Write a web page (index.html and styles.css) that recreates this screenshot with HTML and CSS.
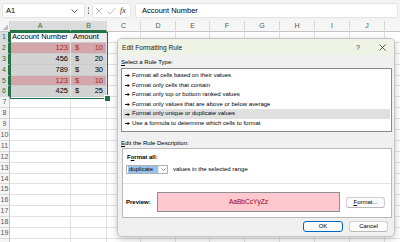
FILE: index.html
```html
<!DOCTYPE html>
<html lang="en">
<head>
	<meta charset="UTF-8">
	<title>Edit Formatting Rule</title>
	<link rel="stylesheet" href="styles.css">
</head>
<body>
	<div class="topbar">
		<div class="namebox">
			<span>A1</span>
			<svg width="7" height="4" viewBox="0 0 7 4"><polyline points="0.5,0.5 3.5,3.5 6.5,0.5" fill="none" stroke="#555" stroke-width="0.9"/></svg>
		</div>
		<div class="dots"><b></b><b></b><b></b></div>
		<div class="fxbox">
			<svg width="8" height="8" viewBox="0 0 8 8"><path d="M1 1L7 7M7 1L1 7" stroke="#b8b8b8" stroke-width="0.9"/></svg>
			<svg width="9" height="8" viewBox="0 0 9 8"><polyline points="0.5,4.5 3,7 8.5,1" fill="none" stroke="#b8b8b8" stroke-width="0.9"/></svg>
			<span class="fx">fx</span>
		</div>
		<div class="formula">Account Number</div>
	</div>

	<div class="sheet">
		<div class="row head"><div class="corner"></div><div class="sel">A</div><div class="sel">B</div><div>C</div><div>D</div><div>E</div><div>F</div><div>G</div><div>H</div><div>I</div><div>J</div><div></div></div>
		<div class="row"><div class="rh sel">1</div><div class="c act">Account Number</div><div class="c first">Amount</div><i></i><i></i><i></i><i></i><i></i><i></i><i></i><i></i><i></i></div>
		<div class="row"><div class="rh sel">2</div><div class="c num dup">123</div><div class="c amt dup"><span>$</span><span>10</span></div><i></i><i></i><i></i><i></i><i></i><i></i><i></i><i></i><i></i></div>
		<div class="row"><div class="rh sel">3</div><div class="c num">456</div><div class="c amt"><span>$</span><span>20</span></div><i></i><i></i><i></i><i></i><i></i><i></i><i></i><i></i><i></i></div>
		<div class="row"><div class="rh sel">4</div><div class="c num">789</div><div class="c amt"><span>$</span><span>30</span></div><i></i><i></i><i></i><i></i><i></i><i></i><i></i><i></i><i></i></div>
		<div class="row"><div class="rh sel">5</div><div class="c num dup">123</div><div class="c amt dup"><span>$</span><span>10</span></div><i></i><i></i><i></i><i></i><i></i><i></i><i></i><i></i><i></i></div>
		<div class="row"><div class="rh sel">6</div><div class="c num">425</div><div class="c amt"><span>$</span><span>25</span></div><i></i><i></i><i></i><i></i><i></i><i></i><i></i><i></i><i></i></div>
		<div class="row"><div class="rh">7</div><i></i><i></i><i></i><i></i><i></i><i></i><i></i><i></i><i></i><i></i><i></i></div>
		<div class="row"><div class="rh">8</div><i></i><i></i><i></i><i></i><i></i><i></i><i></i><i></i><i></i><i></i><i></i></div>
		<div class="row"><div class="rh">9</div><i></i><i></i><i></i><i></i><i></i><i></i><i></i><i></i><i></i><i></i><i></i></div>
		<div class="row"><div class="rh">10</div><i></i><i></i><i></i><i></i><i></i><i></i><i></i><i></i><i></i><i></i><i></i></div>
		<div class="row"><div class="rh">11</div><i></i><i></i><i></i><i></i><i></i><i></i><i></i><i></i><i></i><i></i><i></i></div>
		<div class="row"><div class="rh">12</div><i></i><i></i><i></i><i></i><i></i><i></i><i></i><i></i><i></i><i></i><i></i></div>
		<div class="row"><div class="rh">13</div><i></i><i></i><i></i><i></i><i></i><i></i><i></i><i></i><i></i><i></i><i></i></div>
		<div class="row"><div class="rh">14</div><i></i><i></i><i></i><i></i><i></i><i></i><i></i><i></i><i></i><i></i><i></i></div>
		<div class="row"><div class="rh">15</div><i></i><i></i><i></i><i></i><i></i><i></i><i></i><i></i><i></i><i></i><i></i></div>
		<div class="row"><div class="rh">16</div><i></i><i></i><i></i><i></i><i></i><i></i><i></i><i></i><i></i><i></i><i></i></div>
		<div class="row"><div class="rh">17</div><i></i><i></i><i></i><i></i><i></i><i></i><i></i><i></i><i></i><i></i><i></i></div>
		<div class="row"><div class="rh">18</div><i></i><i></i><i></i><i></i><i></i><i></i><i></i><i></i><i></i><i></i><i></i></div>
		<div class="row"><div class="rh">19</div><i></i><i></i><i></i><i></i><i></i><i></i><i></i><i></i><i></i><i></i><i></i></div>
		<div class="row"><div class="rh"></div><i></i><i></i><i></i><i></i><i></i><i></i><i></i><i></i><i></i><i></i><i></i></div>
	</div>
	<div class="selbox"></div>

	<div class="dialog">
		<div class="titlebar">
			<span class="title">Edit Formatting Rule</span>
			<span class="help">?</span>
			<span class="close"><svg width="7" height="7" viewBox="0 0 7 7"><path d="M0.5 0.5L6.5 6.5M6.5 0.5L0.5 6.5" stroke="#333" stroke-width="0.8"/></svg></span>
		</div>
		<div class="dbody">
			<div class="label"><u>S</u>elect a Rule Type:</div>
			<ul class="rules">
				<li><svg class="arr" width="5" height="3" viewBox="0 0 5 3"><path d="M0 1.5H3" stroke="#000" stroke-width="0.9"/><polygon points="2.6,0 5,1.5 2.6,3" fill="#000"/></svg>Format all cells based on their values</li>
				<li><svg class="arr" width="5" height="3" viewBox="0 0 5 3"><path d="M0 1.5H3" stroke="#000" stroke-width="0.9"/><polygon points="2.6,0 5,1.5 2.6,3" fill="#000"/></svg>Format only cells that contain</li>
				<li><svg class="arr" width="5" height="3" viewBox="0 0 5 3"><path d="M0 1.5H3" stroke="#000" stroke-width="0.9"/><polygon points="2.6,0 5,1.5 2.6,3" fill="#000"/></svg>Format only top or bottom ranked values</li>
				<li><svg class="arr" width="5" height="3" viewBox="0 0 5 3"><path d="M0 1.5H3" stroke="#000" stroke-width="0.9"/><polygon points="2.6,0 5,1.5 2.6,3" fill="#000"/></svg>Format only values that are above or below average</li>
				<li class="cur"><svg class="arr" width="5" height="3" viewBox="0 0 5 3"><path d="M0 1.5H3" stroke="#000" stroke-width="0.9"/><polygon points="2.6,0 5,1.5 2.6,3" fill="#000"/></svg>Format only unique or duplicate values</li>
				<li><svg class="arr" width="5" height="3" viewBox="0 0 5 3"><path d="M0 1.5H3" stroke="#000" stroke-width="0.9"/><polygon points="2.6,0 5,1.5 2.6,3" fill="#000"/></svg>Use a formula to determine which cells to format</li>
			</ul>
			<div class="label gap"><u>E</u>dit the Rule Description:</div>
			<div class="desc">
				<div class="desc-top">
					<div class="fmt">F<u>o</u>rmat all:</div>
					<div class="pick">
						<div class="combo">
							<span class="val">duplicate</span>
							<span class="drop"><svg width="5" height="3" viewBox="0 0 5 3"><polyline points="0.3,0.3 2.5,2.5 4.7,0.3" fill="none" stroke="#666" stroke-width="0.7"/></svg></span>
						</div>
						<span class="range">values in the selected range</span>
					</div>
				</div>
				<div class="desc-bottom">
					<b class="plabel">Preview:</b>
					<div class="preview">AaBbCcYyZz</div>
					<button class="btn fbtn"><u>F</u>ormat...</button>
				</div>
			</div>
			<div class="buttons">
				<button class="btn ok">OK</button>
				<button class="btn">Cancel</button>
			</div>
		</div>
	</div>
</body>
</html>
```

FILE: styles.css
```css
*{margin:0; padding:0; box-sizing:border-box;}
body{
	width:400px;
	height:242px;
	overflow:hidden;
	position:relative;
	background:#fff;
	font-family:"Liberation Sans", Arial, sans-serif;
	color:#000;
}

/* formula bar */
.topbar{
	height:21px;
	background:#f3f3f3;
	display:flex;
	align-items:center;
	padding:0 2px;
}
.namebox{
	width:83px;
	height:15px;
	background:#fff;
	border:1px solid #e4e4e4;
	border-radius:3px;
	display:flex;
	align-items:center;
	justify-content:space-between;
	padding:0 6px 0 3px;
	font-size:7.5px;
}
.dots{
	width:7px;
	display:flex;
	flex-direction:column;
	align-items:center;
	gap:1.2px;
}
.dots b{width:1.3px; height:1.3px; background:#666; border-radius:50%;}
.fxbox{
	width:39px;
	height:15px;
	background:#fff;
	border:1px solid #e4e4e4;
	border-radius:3px;
	display:flex;
	align-items:center;
	gap:4px;
	padding-left:2px;
}
.fx{font-family:"Liberation Serif", serif; font-style:italic; font-size:8px; color:#333;}
.formula{
	flex:1;
	height:15px;
	margin-left:4px;
	background:#fff;
	border:1px solid #e4e4e4;
	border-radius:3px;
	padding-left:6px;
	font-size:7.5px;
	line-height:13px;
}

/* grid */
.row{
	display:grid;
	grid-template-columns:10px 61px 36px 34px 35px 34px repeat(6,35px);
	width:420px;
	height:10.9px;
}
.row>*{
	border-right:1px solid #e1e1e1;
	border-bottom:1px solid #e1e1e1;
	font-size:7.5px;
	line-height:10px;
	white-space:nowrap;
	overflow:hidden;
}
.row.head{height:11px;}
.head>*{
	background:#f5f5f5;
	color:#555;
	text-align:center;
	font-size:7px;
	border-right-color:#d8d8d8;
	border-bottom-color:#c4c4c4;
}
.head .sel{background:#dcdcdc; color:#217346; border-bottom:2px solid #217346;}
.corner{
	background:#f5f5f5 linear-gradient(to top left, #bdbdbd 50%, transparent 50%) no-repeat right 1px bottom 1px / 5px 5px;
}
.row .rh{
	background:#f5f5f5;
	color:#555;
	text-align:center;
	font-size:7px;
	border-right-color:#c4c4c4;
	border-bottom-color:#dadada;
}
.row .rh.sel{background:#dcdcdc; color:#217346; border-right:2px solid #217346;}
.c{
	background:#d3d3d3;
	padding:0 2px;
	border-right-color:#e3e3e3;
	border-bottom-color:#cbcbcb;
}
.c.act{background:#fff;}
.c.first{background:#ececec;}
.num{text-align:right;}
.amt{display:flex; justify-content:space-between; padding:0 3px 0 4px;}
.dup{background:#d3a6ab; color:#a3262f;}
.selbox{
	position:absolute;
	left:9.5px;
	top:31.5px;
	width:98px;
	height:67px;
	border:1.5px solid #217346;
}
.selbox::after{
	content:"";
	position:absolute;
	right:-4px;
	bottom:-4px;
	width:5px;
	height:5px;
	background:#217346;
	border:1px solid #fff;
}

/* dialog */
.dialog{
	position:absolute;
	left:117px;
	top:38px;
	width:278px;
	height:199px;
	background:#f0f0f0;
	border:1px solid #c4c4c4;
	border-radius:5px;
	box-shadow:0 2px 7px rgba(0,0,0,.22);
	overflow:hidden;
	font-size:6px;
}
.titlebar{
	height:16px;
	background:#eef3e5;
	display:flex;
	align-items:center;
	padding-left:4px;
}
.title{flex:1; font-size:6.6px; color:#1a1a1a;}
.help{width:20px; text-align:center; font-size:7px; color:#333;}
.close{width:22px; margin:0 1px 0 3px; display:flex; justify-content:center;}
.dbody{padding:3px 2px 0 3px;}
.label{line-height:8px; height:8px;}
.label.gap{margin-top:7px;}
.rules{
	list-style:none;
	margin-top:2px;
	background:#fff;
	border:1px solid #8a8a8a;
	padding:2px 1px;
}
.rules li{
	height:9.6px;
	line-height:9.6px;
	padding-left:2px;
	display:flex;
	align-items:center;
	white-space:nowrap;
}
.rules li.cur{background:#e0e0e0;}
.arr{margin-right:2px; flex:none;}
.desc{
	margin:1.4px 0 0 1px;
	height:70px;
	background:#fff;
	border:1px solid #b9b9b9;
}
.desc-top{
	height:35px;
	border-bottom:1px solid #e3e3e3;
	padding:4px 3px 0 3px;
}
.fmt{font-weight:bold; line-height:8px; margin-left:1px;}
.pick{display:flex; align-items:center; margin-top:4px;}
.combo{
	width:42px;
	height:9px;
	border:1px solid #b0b0b0;
	display:flex;
	align-items:center;
	padding-left:1px;
}
.val{
	width:30px;
	height:7px;
	line-height:7px;
	background:#99c3ed;
	padding-left:1px;
}
.drop{flex:1; display:flex; justify-content:center; border-left:1px solid #e3e3e3; height:7px; align-items:center;}
.range{margin-left:5px;}
.desc-bottom{
	height:33px;
	display:flex;
	align-items:center;
	padding:4px 6px 0 3px;
}
.plabel{width:31px; flex:none;}
.preview{
	width:183px;
	height:20px;
	background:#ffc7ce;
	border:1px solid #8f8f8f;
	color:#9c0006;
	font-size:6.6px;
	line-height:18px;
	text-align:center;
}
.btn{
	height:11px;
	background:#fbfbfb;
	border:1px solid #d0d0d0;
	border-bottom-color:#b8b8b8;
	border-radius:3px;
	font-family:"Liberation Sans", Arial, sans-serif;
	font-size:6px;
	color:#000;
}
.fbtn{width:39px; margin-left:6px;}
.buttons{
	display:flex;
	justify-content:flex-end;
	gap:6px;
	margin-top:3px;
	padding-right:4px;
}
.buttons .btn{width:39px;}
.buttons .ok{width:40px; border-color:#0067c0;}
```
